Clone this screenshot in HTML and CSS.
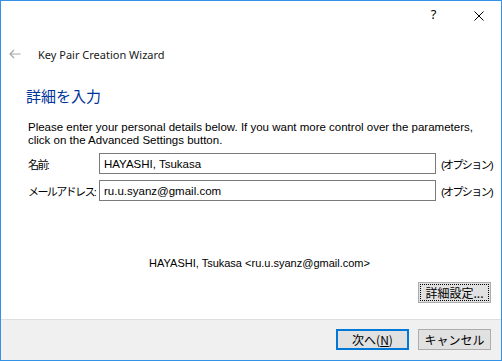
FILE: index.html
```html
<!DOCTYPE html>
<html lang="ja">

<head>
  <meta charset="UTF-8">
  <meta name="viewport" content="width=device-width, initial-scale=1.0">
  <title>Key Pair Creation Wizard</title>
  <link rel="stylesheet" href="styles.css">
</head>

<body>
  <div class="window">
    <div class="titlebar">
      <span class="caption-btn help">?</span>
      <span class="caption-btn close">
        <svg width="10" height="10" viewBox="0 0 10 10">
          <path d="M0.5 0.5 L9.5 9.5 M9.5 0.5 L0.5 9.5" stroke="#000" stroke-width="1" fill="none" />
        </svg>
      </span>
    </div>

    <header class="wizard-header">
      <svg class="back" width="12" height="10" viewBox="0 0 12 10">
        <path d="M11.5 5 H1 M5 1 L1 5 L5 9" stroke="#a8a8a8" stroke-width="1.2" fill="none" />
      </svg>
      <span class="wizard-title">Key Pair Creation Wizard</span>
    </header>

    <main class="content">
      <h1 class="page-title">詳細を入力</h1>
      <p class="intro">Please enter your personal details below. If you want more control over the parameters,<br>click on the Advanced Settings button.</p>

      <div class="form">
        <label class="field-label">名前:</label>
        <div class="field-input">HAYASHI, Tsukasa</div>
        <span class="field-note">(オプション)</span>

        <label class="field-label">メールアドレス:</label>
        <div class="field-input">ru.u.syanz@gmail.com</div>
        <span class="field-note">(オプション)</span>
      </div>

      <p class="summary">HAYASHI, Tsukasa &lt;ru.u.syanz@gmail.com&gt;</p>

      <div class="advanced-row">
        <button class="btn btn-focus">詳細設定...</button>
      </div>
    </main>

    <footer class="footer">
      <button class="btn btn-default">次へ(<u>N</u>)</button>
      <button class="btn">キャンセル</button>
    </footer>
  </div>
</body>

</html>
```

FILE: styles.css
```css
html {
  box-sizing: border-box;
  font-family: 'Liberation Sans', 'Noto Sans CJK JP', sans-serif;
  font-size: 12px;
}

*,
*::before,
*::after {
  box-sizing: inherit;
}

body {
  margin: 0;
  background-color: #fff;
}

.window {
  width: 502px;
  height: 361px;
  border: 1px solid #3391e6;
  display: flex;
  flex-direction: column;
  background-color: #fff;
  color: #000;
}

.titlebar {
  height: 29px;
  display: flex;
  justify-content: flex-end;
}

.caption-btn {
  width: 45px;
  height: 29px;
  display: flex;
  align-items: center;
  justify-content: center;
}

.help {
  font-family: 'Noto Sans', sans-serif;
  font-size: 13px;
  padding-bottom: 3px;
}

.close {
  padding-top: 1px;
}

.wizard-header {
  height: 26px;
  display: flex;
  align-items: center;
  padding-left: 8px;
  margin-top: 11px;
}

.back {
  margin-right: 17px;
}

.wizard-title {
  font-family: 'Noto Sans', sans-serif;
  font-size: 11px;
  color: #1a1a1a;
}

.content {
  flex: 1;
  padding: 0 10px 0 27px;
}

.page-title {
  margin: 19px 0 0 -2px;
  font-family: 'Noto Sans CJK JP', sans-serif;
  font-weight: normal;
  font-size: 15px;
  line-height: 20px;
  color: #003399;
}

.intro {
  margin: 15px 0 0;
  font-size: 11.5px;
  line-height: 13px;
}

.form {
  margin-top: 6px;
  display: grid;
  grid-template-columns: 71px 337px auto;
  row-gap: 6px;
  align-items: center;
}

.field-label,
.field-note {
  white-space: nowrap;
  font-size: 11px;
  letter-spacing: -1.6px;
}

.field-note {
  padding-left: 5px;
}

.field-input {
  height: 21px;
  border: 1px solid #7a7a7a;
  padding: 0 4px;
  display: flex;
  align-items: center;
  font-size: 11.5px;
}

.summary {
  margin: 56px 0 0;
  text-align: center;
  font-size: 11px;
  line-height: 13px;
}

.advanced-row {
  margin-top: 12px;
  display: flex;
  justify-content: flex-end;
}

.btn {
  width: 73px;
  height: 21px;
  border: 1px solid #adadad;
  background-color: #e1e1e1;
  font-family: 'Noto Sans CJK JP', sans-serif;
  font-size: 12px;
  padding: 0;
  color: #000;
}

.btn-focus {
  outline: 1px dotted #000;
  outline-offset: -3px;
}

.btn-default {
  border: 2px solid #0078d7;
}

.footer {
  height: 41px;
  background-color: #f0f0f0;
  border-top: 1px solid #dfdfdf;
  display: flex;
  justify-content: flex-end;
  align-items: center;
  gap: 9px;
  padding: 0 10px 2px 0;
}
```
